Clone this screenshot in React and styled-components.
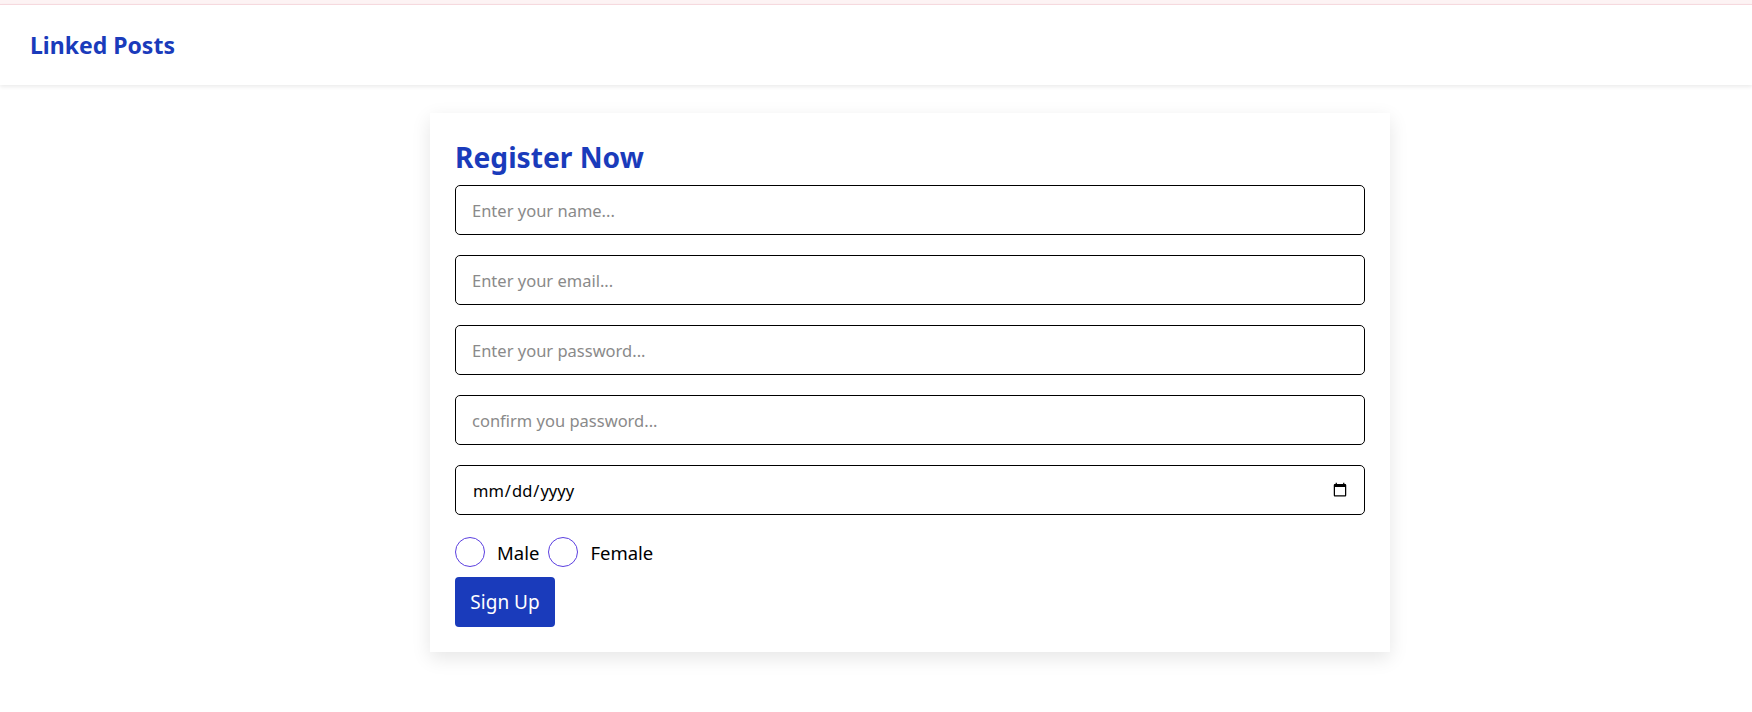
import React from 'react'
import styled, { createGlobalStyle } from 'styled-components'

const GlobalStyle = createGlobalStyle`
    * {
        box-sizing: border-box;
    }
    body {
        margin: 0;
        font-family: "Noto Sans", "Open Sans", sans-serif;
        background: #ffffff;
        color: #000;
    }
`

const Page = styled.div`
    min-height: 712px;
    border-top: 4px solid #fdf3f4;
`

const Header = styled.header`
    height: 81px;
    border-top: 1px solid #f6d9de;
    background: #fff;
    display: flex;
    align-items: center;
    padding: 0 30px;
    box-shadow: 0 2px 4px rgba(0, 0, 0, 0.08);
    h1 {
        margin: 0;
        font-size: 23px;
        font-weight: 700;
        color: #1a3bbb;
    }
`

const Main = styled.main`
    display: flex;
    padding: 28px 0 0 430px;
`

const Card = styled.form`
    width: 960px;
    padding: 24px 25px 25px;
    background: #fff;
    box-shadow: 0 6px 18px rgba(0, 0, 0, 0.1);
    display: flex;
    flex-direction: column;
    h2 {
        margin: 0 0 8px;
        font-size: 28.2px;
        line-height: 40px;
        font-weight: 700;
        color: #1a3bbb;
    }
`

const Field = styled.input`
    width: 100%;
    height: 50px;
    margin-bottom: 20px;
    padding: 0 16px;
    border: 1px solid #000;
    border-radius: 5px;
    font-family: "Noto Sans", sans-serif;
    font-size: 16.5px;
    color: #000;
    outline: none;
    &::placeholder {
        color: #8a8a8a;
    }
    &[type='date'] {
        margin-bottom: 22px;
        padding-right: 14px;
    }
`

const GenderRow = styled.div`
    display: flex;
    align-items: center;
    height: 30px;
    margin-bottom: 10px;
    label {
        display: flex;
        align-items: center;
        gap: 12px;
        margin-right: 9px;
        font-size: 18.5px;
    }
`

const Radio = styled.input`
    appearance: none;
    width: 30px;
    height: 30px;
    margin: 0;
    border: 1px solid #5b3fe0;
    border-radius: 50%;
    background: #fff;
`

const Button = styled.button`
    align-self: flex-start;
    width: 100px;
    height: 50px;
    border: none;
    border-radius: 4px;
    background: #1a3bbb;
    color: #fff;
    font-family: "Noto Sans", sans-serif;
    font-size: 19px;
`

export default function App() {
    return (
        <>
            <GlobalStyle />
            <Page>
                <Header>
                    <h1>Linked Posts</h1>
                </Header>
                <Main>
                    <Card onSubmit={(e) => e.preventDefault()}>
                        <h2>Register Now</h2>
                        <Field type='text' placeholder='Enter your name...' />
                        <Field type='email' placeholder='Enter your email...' />
                        <Field type='password' placeholder='Enter your password...' />
                        <Field type='password' placeholder='confirm you password...' />
                        <Field type='date' />
                        <GenderRow>
                            <label>
                                <Radio type='radio' name='gender' value='male' />
                                Male
                            </label>
                            <label>
                                <Radio type='radio' name='gender' value='female' />
                                Female
                            </label>
                        </GenderRow>
                        <Button type='submit'>Sign Up</Button>
                    </Card>
                </Main>
            </Page>
        </>
    )
}
